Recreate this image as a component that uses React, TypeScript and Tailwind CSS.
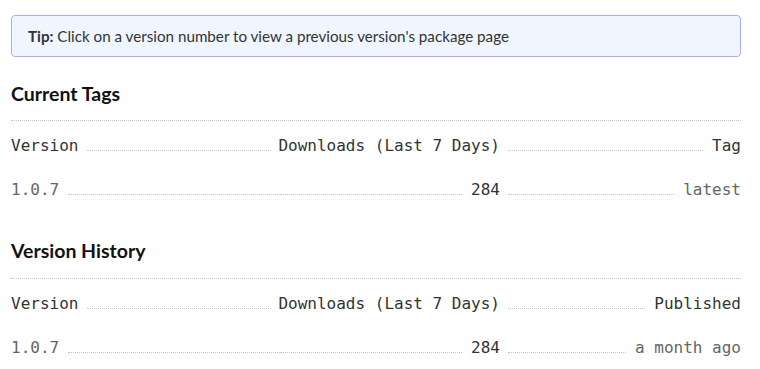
const sans = "font-['Lato','Noto_Sans',sans-serif]";
const mono = "font-['DejaVu_Sans_Mono','Liberation_Mono',monospace]";

const Dots = () => (
  <span className="flex-1 h-0 border-b border-dotted border-[#c4c4c4]" />
);

type Row = { version: string; downloads: string; last: string };

const VersionTable = ({ lastLabel, rows }: { lastLabel: string; rows: Row[] }) => (
  <div className={`${mono} text-base border-t border-dotted border-[#c4c4c4] pt-[3px]`}>
    {/* header */}
    <div className="grid grid-cols-[269px_220px_1fr] h-[44px] items-center text-[#333]">
      <div className="flex items-baseline gap-[9px] pr-[9px]">
        <span>Version</span>
        <Dots />
      </div>
      <div className="flex items-baseline justify-end">
        <span className="whitespace-nowrap">Downloads (Last 7 Days)</span>
      </div>
      <div className="flex items-baseline gap-[9px] pl-[8px]">
        <Dots />
        <span>{lastLabel}</span>
      </div>
    </div>
    {rows.map((r) => (
      <div
        key={r.version}
        className="grid grid-cols-[269px_220px_1fr] h-[44px] items-center"
      >
        <div className="flex items-baseline gap-[9px]">
          <a className="text-[#666]">{r.version}</a>
          <Dots />
        </div>
        <div className="flex items-baseline gap-[9px]">
          <Dots />
          <span className="text-[#333]">{r.downloads}</span>
        </div>
        <div className="flex items-baseline gap-[9px] pl-[8px]">
          <Dots />
          <span className="text-[#666] whitespace-nowrap">{r.last}</span>
        </div>
      </div>
    ))}
  </div>
);

export default function App() {
  return (
    <div className="w-[760px] h-[369px] bg-white pl-[11px] pr-[19px] pt-[15px] overflow-hidden">
      {/* tip */}
      <div
        className={`${sans} h-[42px] flex items-center px-4 rounded-[4px] border border-[#a9a9f7] bg-[#f0f6ff] text-[15.2px] text-[#333]`}
      >
        <span>
          <strong className="font-bold">Tip:</strong> Click on a version number to
          view a previous version's package page
        </span>
      </div>

      <h2
        className={`${sans} mt-[23px] mb-[12px] h-[28px] leading-[28px] text-[19.5px] font-bold text-[#111]`}
      >
        Current Tags
      </h2>
      <VersionTable
        lastLabel="Tag"
        rows={[{ version: "1.0.7", downloads: "284", last: "latest" }]}
      />

      <h2
        className={`${sans} mt-[25px] mb-[13px] h-[28px] leading-[28px] text-[19.5px] font-bold text-[#111]`}
      >
        Version History
      </h2>
      <VersionTable
        lastLabel="Published"
        rows={[{ version: "1.0.7", downloads: "284", last: "a month ago" }]}
      />
    </div>
  );
}
